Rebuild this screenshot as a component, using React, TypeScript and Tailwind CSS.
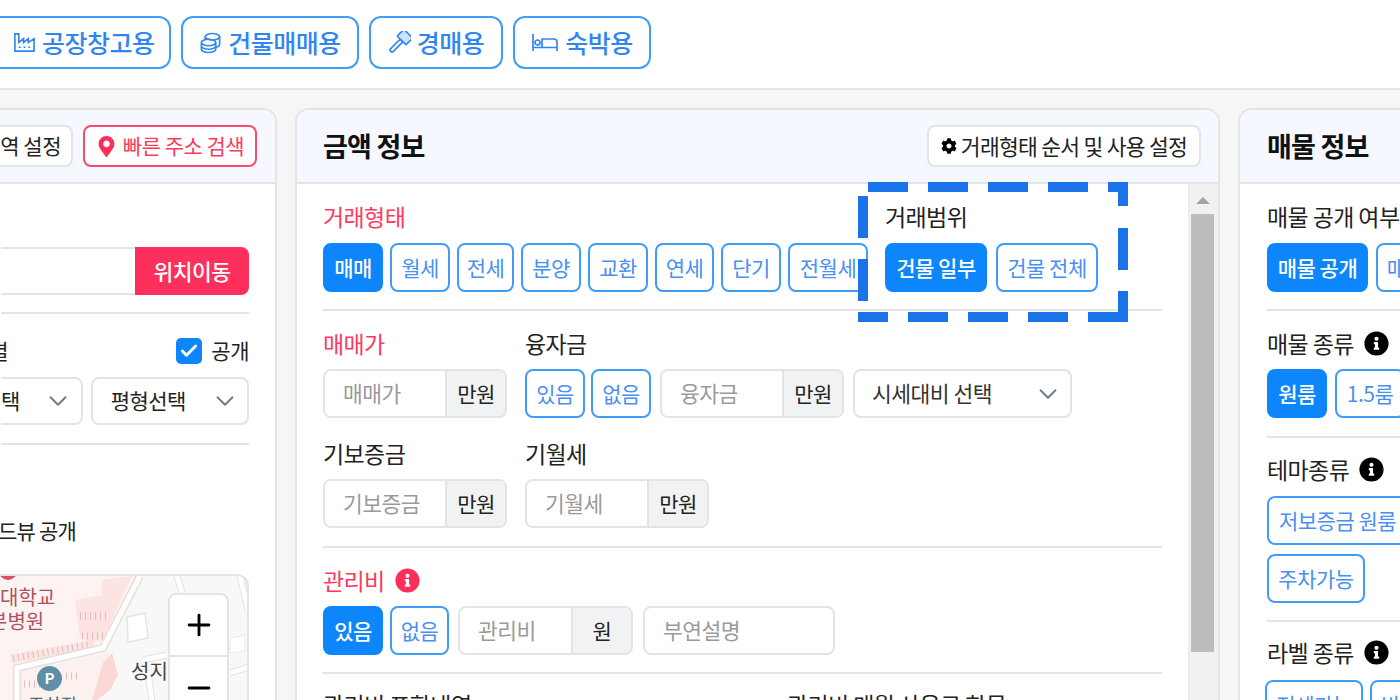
import React from 'react';
import { Check, ChevronDown, Minus, Plus } from 'lucide-react';
import { FaCog, FaInfoCircle, FaMapMarkerAlt } from 'react-icons/fa';

const Chip = ({ label, on = false, className = '' }: { label: string; on?: boolean; className?: string }) => (
  <button
    className={`h-[49px] shrink-0 whitespace-nowrap rounded-[8px] border-2 text-[21px] tracking-[-0.5px] ${
      on ? 'border-[#0d86fb] bg-[#0d86fb] text-white font-medium' : 'border-[#3f9dfa] bg-white text-[#4a90f0]'
    } ${className}`}
  >
    {label}
  </button>
);

const InputGroup = ({ placeholder, unit, className = 'w-[184px]' }: { placeholder: string; unit: string; className?: string }) => (
  <div className={`flex h-[49px] shrink-0 overflow-hidden rounded-[8px] border-2 border-[#e4e4e4] text-[21px] tracking-[-0.5px] ${className}`}>
    <div className="flex flex-1 items-center whitespace-nowrap bg-white pl-[18px] text-[21.5px] text-[#9a9a9a]">{placeholder}</div>
    <div className="flex w-[60px] items-center justify-center border-l-2 border-[#e4e4e4] bg-[#f1f2f4] text-[#222]">{unit}</div>
  </div>
);

const SectionLabel = ({ children, red = false, info = false }: { children: React.ReactNode; red?: boolean; info?: boolean }) => (
  <div className={`flex h-[26px] items-center gap-[10px] whitespace-nowrap pt-[2px] text-[23px] tracking-[-0.6px] ${red ? 'text-[#fb3a5e]' : 'text-[#222]'}`}>
    {children}
    {info && <FaInfoCircle className={`text-[25px] ${red ? 'text-[#fb2f59]' : 'text-black'}`} />}
  </div>
);

const PanelHeader = ({ children }: { children: React.ReactNode }) => (
  <div className="flex h-[74px] shrink-0 items-center justify-between border-b-2 border-[#e4e4e4] bg-[#f5f9ff]">{children}</div>
);

const Divider = () => <div className="h-[2px] bg-[#e4e4e4]" />;

const FactoryIcon = () => (
  <svg className="h-[23px] w-[23px]" viewBox="0 0 24 24" fill="none" stroke="currentColor" strokeWidth="1.7">
    <path d="M2 3H6V12L11 8V12L16 8V12L22 8V21H2Z" />
    <path d="M6 17H8M11 17H13M16 17H18" />
  </svg>
);

const CoinsIcon = () => (
  <svg className="h-[23px] w-[23px]" viewBox="0 0 24 24" fill="none" stroke="currentColor" strokeWidth="1.7">
    <ellipse cx="14" cy="6" rx="7.5" ry="3.4" />
    <path d="M21.5 6V14C21.5 15 20 16.4 17.5 17M6.5 6V8.6" />
    <ellipse cx="10" cy="12" rx="7.5" ry="3.4" />
    <path d="M2.5 12V19C2.5 20.9 5.9 22.4 10 22.4S17.5 20.9 17.5 19V12M2.5 15.6C2.5 17.5 5.9 19 10 19S17.5 17.5 17.5 15.6" />
  </svg>
);

const GavelIcon = () => (
  <svg className="h-[23px] w-[23px]" viewBox="0 0 24 24" fill="none" stroke="currentColor" strokeWidth="1.7">
    <g transform="rotate(45 12 12)">
      <rect x="5.5" y="-1" width="13" height="10" rx="1" fill="#cfe3fc" />
      <rect x="10" y="9" width="4" height="16" rx="2" />
    </g>
  </svg>
);

const BedIcon = () => (
  <svg className="h-[19px] w-[28px]" viewBox="0 0 28 19" fill="none" stroke="currentColor" strokeWidth="1.7">
    <path d="M2 1V18M2 14.5H26M26 18V9A3 3 0 0 0 23 6H11V14.5" />
    <circle cx="6.5" cy="9.5" r="2.5" />
  </svg>
);

const tabs = [
  { label: '공장창고용', icon: <FactoryIcon />, w: 'w-[205px] -ml-[34px] pl-[45px]' },
  { label: '건물매매용', icon: <CoinsIcon />, w: 'w-[178px] justify-center' },
  { label: '경매용', icon: <GavelIcon />, w: 'w-[134px] justify-center' },
  { label: '숙박용', icon: <BedIcon />, w: 'w-[138px] justify-center' },
];

// annotation box drawn over the deal range block
const dashes = [
  'M10 5H50M70 5H110M130 5H170M190 5H230M250 5H265V24',
  'M265 46V88M265 109V135H230M210 135H170M150 135H110M90 135H50M30 135H0',
  'M5 14V56M5 77V119',
];

const MapBox = () => (
  <div className="relative -ml-[1px] mt-[31px] h-[126px] overflow-hidden rounded-tr-[12px] border-t-2 border-r-2 border-[#e4e4e4] bg-[#f8f8f8]">
    <svg className="absolute inset-0 h-[124px] w-[247px]" viewBox="0 0 247 124" fill="none">
      <path d="M0 0H140L103 72L17 92V124H0Z" fill="#fdf3f2" />
      <path d="M20 96L104 78L112 77L118 99L110 114L97 124H20Z" fill="#fdf1f0" />
      <path d="M102 4L132 0L103 64L93 66L80 62L75 24L102 19Z" fill="#fbe4e2" />
      <path d="M10 79L92 64L95 74L12 87Z" fill="#fbe4e2" />
      <path d="M103 87L112 77L118 99L110 114L97 124H92Z" fill="#f9d8d5" />
      <path d="M80 40H110M82 60H106M13 82L92 68M24 108H44M66 100H78" stroke="#e3bcb9" strokeWidth="7" strokeDasharray="1 4" />
      <path d="M140 0L103 72L17 92V124" stroke="#e9dcdc" strokeWidth="8" />
      <path d="M140 0L103 72L17 92V124" stroke="#fff" strokeWidth="5" />
      <path d="M177 0L182 16M240 0L248 34M143 84L167 79M230 97L248 91M148 98L152 124" stroke="#e2e2e2" strokeWidth="7" />
      <path d="M177 0L182 16M240 0L248 34M143 84L167 79M230 97L248 91M148 98L152 124" stroke="#fff" strokeWidth="5" />
      <path d="M127 41L145 37L148 62L128 66Z" fill="#fff" stroke="#e4e4e4" strokeWidth="1.5" />
      <path d="M230 62L245 59V75L230 77Z" fill="#fff" stroke="#ececec" strokeWidth="1" />
    </svg>
    <div className="absolute left-[-1px] top-[-14px] h-[18px] w-[18px] rounded-full bg-[#d9505f]" />
    <div className="absolute left-0 top-[9px] whitespace-nowrap text-[20px] leading-[24px] text-[#b0505f]">대학교</div>
    <div className="absolute left-[-11px] top-[33px] whitespace-nowrap text-[20px] leading-[24px] text-[#b0505f]">본병원</div>
    <div className="absolute left-[37px] top-[90px] flex h-[25px] w-[25px] items-center justify-center rounded-full bg-[#5e8fa6] text-[15px] font-bold text-white">P</div>
    <div className="absolute left-[28px] top-[116px] whitespace-nowrap text-[18px] leading-[24px] text-[#4a6f82]">주차장</div>
    <div className="absolute left-[131px] top-[82px] whitespace-nowrap text-[20px] leading-[26px] text-[#444]">성지</div>
    <div className="absolute left-[168px] top-[17px] flex w-[61px] flex-col rounded-[8px] border-2 border-[#e4e4e4] bg-white">
      <div className="flex h-[62px] items-center justify-center border-b-2 border-[#e4e4e4]"><Plus className="h-[34px] w-[34px] text-black" strokeWidth={2} /></div>
      <div className="flex h-[62px] items-center justify-center"><Minus className="h-[34px] w-[34px] text-black" strokeWidth={2} /></div>
    </div>
  </div>
);

const LeftPanel = () => (
  <div className="-ml-[25px] flex w-[302px] shrink-0 flex-col overflow-hidden rounded-t-[14px] border-2 border-b-0 border-[#e4e4e4] bg-white">
    <PanelHeader>
      <div className="-ml-[30px] flex items-center gap-[10px] pr-[18px]">
        <div className="flex h-[42px] w-[126px] items-center justify-end whitespace-nowrap rounded-[8px] border-2 border-[#e4e4e4] bg-white pr-[10px] text-[21px] tracking-[-0.5px] text-[#222]">
          지역 설정
        </div>
        <div className="flex h-[42px] w-[174px] items-center justify-center gap-[6px] whitespace-nowrap rounded-[8px] border-2 border-[#fb4b6c] bg-white text-[21px] tracking-[-0.5px] text-[#fb3a5e]">
          <FaMapMarkerAlt className="text-[#fb2f59]" />
          빠른 주소 검색
        </div>
      </div>
    </PanelHeader>
    <div className="flex flex-col pl-[24px] pr-[26px]">
      <div className="mt-[63px] flex h-[48px]">
        <div className="flex-1 border-y-2 border-[#e4e4e4]" />
        <div className="flex w-[114px] items-center justify-center rounded-r-[8px] bg-[#ff2f5b] text-[21.5px] font-medium tracking-[-0.5px] text-white">
          위치이동
        </div>
      </div>
      <div className="mt-[17px]"><Divider /></div>
      <div className="mt-[23px] flex h-[28px] items-center justify-between text-[21px] tracking-[-0.5px] text-[#222]">
        <span className="-ml-[18px] w-[25px] overflow-hidden whitespace-nowrap text-right">별</span>
        <span className="flex items-center gap-[9px]">
          <span className="flex h-[26px] w-[26px] items-center justify-center rounded-[5px] bg-[#0d86fb]">
            <Check className="h-[20px] w-[20px] text-white" strokeWidth={3.5} />
          </span>
          공개
        </span>
      </div>
      <div className="mt-[12px] flex justify-end gap-[8px]">
        <div className="flex h-[48px] w-[82px] items-center justify-between overflow-hidden rounded-r-[8px] border-y-2 border-r-2 border-[#e4e4e4] pr-[8px] text-[21px] tracking-[-0.5px] text-[#222]">
          <span className="w-[22px] overflow-hidden whitespace-nowrap">택</span>
          <ChevronDown className="h-[30px] w-[30px] text-[#6f7b85]" strokeWidth={1.5} />
        </div>
        <div className="flex h-[48px] w-[159px] items-center justify-between rounded-[8px] border-2 border-[#e4e4e4] pl-[18px] pr-[7px] text-[21px] tracking-[-0.5px] text-[#222]">
          평형선택
          <ChevronDown className="h-[30px] w-[30px] text-[#6f7b85]" strokeWidth={1.5} />
        </div>
      </div>
      <div className="mt-[18px]"><Divider /></div>
      <div className="-ml-[3px] mt-[72px] h-[26px] whitespace-nowrap text-[21px] leading-[26px] tracking-[-0.8px] text-[#222]">드뷰 공개</div>
      <MapBox />
    </div>
  </div>
);

const MiddlePanel = () => (
  <div className="relative flex w-[925px] shrink-0 flex-col overflow-hidden rounded-t-[14px] border-2 border-b-0 border-[#e4e4e4] bg-white">
    <PanelHeader>
      <div className="pl-[26px] text-[27px] font-bold tracking-[-0.8px] text-[#111]">금액 정보</div>
      <div className="mr-[17px] flex h-[42px] w-[274px] items-center justify-center gap-[4px] whitespace-nowrap rounded-[8px] border-2 border-[#e4e4e4] bg-white text-[21.5px] tracking-[-0.7px] text-[#222]">
        <FaCog className="text-[16px] text-black" />
        거래형태 순서 및 사용 설정
      </div>
    </PanelHeader>
    <div className="flex min-h-0 flex-1">
      <div className="flex min-w-0 flex-1 flex-col pl-[26px] pr-[26px] pt-[18px]">
        <div className="flex gap-[17px]">
          <div className="w-[545px] shrink-0">
            <SectionLabel red>거래형태</SectionLabel>
            <div className="mt-[15px] flex w-[545px] gap-[7px] overflow-hidden">
              <Chip label="매매" on className="w-[60px]" />
              <Chip label="월세" className="w-[60px]" />
              <Chip label="전세" className="w-[57px]" />
              <Chip label="분양" className="w-[60px]" />
              <Chip label="교환" className="w-[60px]" />
              <Chip label="연세" className="w-[59px]" />
              <Chip label="단기" className="w-[60px]" />
              <Chip label="전월세" className="w-[80px]" />
            </div>
          </div>
          <div>
            <SectionLabel>거래범위</SectionLabel>
            <div className="mt-[15px] flex gap-[9px]">
              <Chip label="건물 일부" on className="w-[102px]" />
              <Chip label="건물 전체" className="w-[102px]" />
            </div>
          </div>
        </div>
        <div className="mt-[17px]"><Divider /></div>
        <div className="mt-[18px] flex gap-[18px]">
          <div>
            <SectionLabel red>매매가</SectionLabel>
            <div className="mt-[14px]"><InputGroup placeholder="매매가" unit="만원" /></div>
          </div>
          <div>
            <SectionLabel>융자금</SectionLabel>
            <div className="mt-[14px] flex gap-[6px]">
              <Chip label="있음" className="w-[60px]" />
              <Chip label="없음" className="w-[60px]" />
              <InputGroup placeholder="융자금" unit="만원" className="ml-[3px] w-[184px]" />
              <div className="ml-[3px] flex h-[49px] w-[219px] items-center justify-between rounded-[8px] border-2 border-[#e4e4e4] pl-[17px] pr-[7px] text-[21.5px] tracking-[-0.5px] text-[#333]">
                시세대비 선택
                <ChevronDown className="h-[30px] w-[30px] text-[#6f7b85]" strokeWidth={1.5} />
              </div>
            </div>
          </div>
        </div>
        <div className="mt-[21px] flex gap-[18px]">
          <div>
            <SectionLabel>기보증금</SectionLabel>
            <div className="mt-[14px]"><InputGroup placeholder="기보증금" unit="만원" /></div>
          </div>
          <div>
            <SectionLabel>기월세</SectionLabel>
            <div className="mt-[14px]"><InputGroup placeholder="기월세" unit="만원" /></div>
          </div>
        </div>
        <div className="mt-[18px]"><Divider /></div>
        <div className="mt-[18px]"><SectionLabel red info>관리비</SectionLabel></div>
        <div className="mt-[14px] flex gap-[7px]">
          <Chip label="있음" on className="w-[60px]" />
          <Chip label="없음" className="w-[59px]" />
          <InputGroup placeholder="관리비" unit="원" className="ml-[2px] w-[175px]" />
          <div className="ml-[3px] flex h-[49px] w-[192px] items-center rounded-[8px] border-2 border-[#e4e4e4] pl-[18px] text-[21.5px] tracking-[-0.5px] text-[#9a9a9a]">부연설명</div>
        </div>
        <div className="mt-[17px]"><Divider /></div>
        <div className="mt-[16px] flex gap-[138px]">
          <div className="w-[326px]"><SectionLabel>관리비 포함내역</SectionLabel></div>
          <SectionLabel>관리비 매월 사용료 항목</SectionLabel>
        </div>
      </div>
      <div className="flex w-[30px] shrink-0 flex-col items-center border-l border-[#e8e8e8] bg-[#f1f1f1] pr-[2px]">
        <div className="mt-[13px] h-0 w-0 border-x-[7px] border-b-[7px] border-x-transparent border-b-[#a3a3a3]" />
        <div className="mt-[10px] h-[438px] w-[23px] bg-[#bcbcbc]" />
      </div>
    </div>
    <svg className="absolute left-[561px] top-[72px] h-[140px] w-[270px]" viewBox="0 0 270 140" fill="none">
      {dashes.map((d) => (
        <path key={d} d={d} stroke="#1a73e8" strokeWidth="10" />
      ))}
    </svg>
  </div>
);

const RightPanel = () => (
  <div className="flex w-[300px] shrink-0 flex-col overflow-hidden rounded-t-[14px] border-2 border-b-0 border-[#e4e4e4] bg-white">
    <PanelHeader>
      <div className="pl-[27px] text-[27px] font-bold tracking-[-0.8px] text-[#111]">매물 정보</div>
    </PanelHeader>
    <div className="flex flex-col pl-[27px] pt-[18px]">
      <SectionLabel>매물 공개 여부</SectionLabel>
      <div className="mt-[15px] flex gap-[8px]">
        <Chip label="매물 공개" on className="w-[101px]" />
        <Chip label="매물 비공개" className="w-[120px]" />
      </div>
      <div className="mt-[17px]"><Divider /></div>
      <div className="mt-[18px]"><SectionLabel info>매물 종류</SectionLabel></div>
      <div className="mt-[14px] flex gap-[8px]">
        <Chip label="원룸" on className="w-[60px]" />
        <Chip label="1.5룸" className="w-[70px]" />
      </div>
      <div className="mt-[18px]"><Divider /></div>
      <div className="mt-[17px]"><SectionLabel info>테마종류</SectionLabel></div>
      <div className="mt-[15px] flex flex-col gap-[9px]">
        <Chip label="저보증금 원룸" className="w-[141px]" />
        <Chip label="주차가능" className="w-[98px]" />
      </div>
      <div className="mt-[17px]"><Divider /></div>
      <div className="mt-[16px]"><SectionLabel info>라벨 종류</SectionLabel></div>
      <div className="-ml-[2px] mt-[16px] flex gap-[7px]">
        <Chip label="전세가능" className="w-[98px]" />
        <Chip label="반려동물" className="w-[98px]" />
      </div>
    </div>
  </div>
);

export default function App() {
  return (
    <div className="flex h-[700px] w-[1400px] flex-col overflow-hidden bg-[#f6f6f6] font-['Noto_Sans_CJK_KR','Noto_Sans',sans-serif]">
      <div className="flex h-[90px] shrink-0 items-start gap-[10px] border-b-2 border-[#e4e4e4] bg-white pt-[16px]">
        {tabs.map((t) => (
          <button
            key={t.label}
            className={`flex h-[53px] shrink-0 items-center gap-[6px] whitespace-nowrap rounded-[12px] border-2 border-[#3f9dfa] bg-white text-[25px] font-medium tracking-[-0.5px] text-[#2f86f0] ${t.w}`}
          >
            {t.icon}
            {t.label}
          </button>
        ))}
      </div>
      <div className="flex min-h-0 flex-1 gap-[18px] pt-[18px]">
        <LeftPanel />
        <MiddlePanel />
        <RightPanel />
      </div>
    </div>
  );
}
